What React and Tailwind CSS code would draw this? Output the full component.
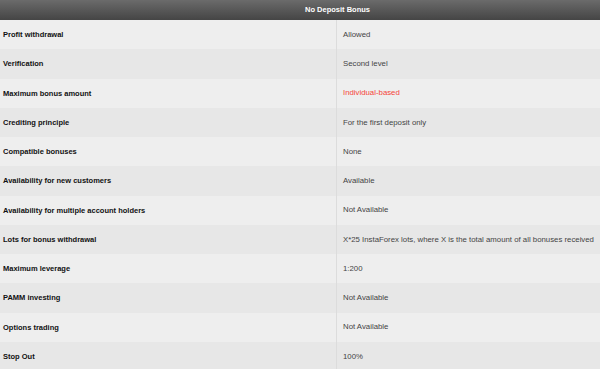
export default function App() {
  const rows = [
    ["Profit withdrawal", "Allowed"],
    ["Verification", "Second level"],
    ["Maximum bonus amount", "Individual-based", true],
    ["Crediting principle", "For the first deposit only"],
    ["Compatible bonuses", "None"],
    ["Availability for new customers", "Available"],
    ["Availability for multiple account holders", "Not Available"],
    ["Lots for bonus withdrawal", "X*25 InstaForex lots, where X is the total amount of all bonuses received"],
    ["Maximum leverage", "1:200"],
    ["PAMM investing", "Not Available"],
    ["Options trading", "Not Available"],
    ["Stop Out", "100%"],
  ];
  return (
    <div className="w-[600px] h-[369px] overflow-hidden bg-[#eeeeee] font-['Liberation_Sans',Arial,sans-serif]">
      <div className="w-[675px]">
        <div className="h-[20px] flex items-center justify-center bg-gradient-to-b from-[#6b6b6b] to-[#454545] text-white font-bold text-[7.5px]">
          No Deposit Bonus
        </div>
        {rows.map(([k, v, red], i) => (
          <div
            key={k}
            className={`h-[29.27px] flex items-center ${i % 2 === 1 ? "bg-[#e7e7e7]" : "bg-[#eeeeee]"}`}
          >
            <div className="w-[337px] h-full flex items-center pl-[3px] font-bold text-[7.5px] text-[#111111] border-r border-[#dcdcdc]">
              {k}
            </div>
            <div className={`flex-1 h-full flex items-center pl-[6px] text-[7.8px] ${red ? "text-[#f5453a]" : "text-[#444444]"}`}>
              {v}
            </div>
          </div>
        ))}
      </div>
    </div>
  );
}
